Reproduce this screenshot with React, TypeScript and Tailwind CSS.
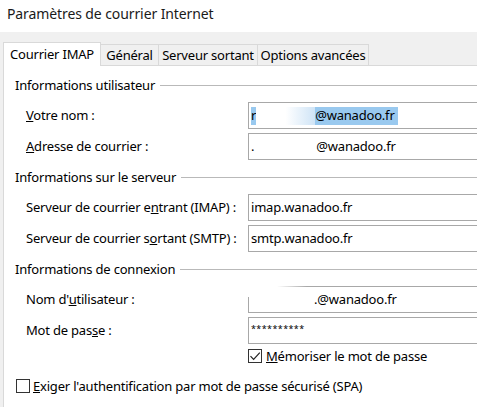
import React from "react";

const font = { fontFamily: '"Noto Sans", "Open Sans", sans-serif' };

function GroupHeader({ title }: { title: string }) {
    return (
        <div className="flex items-center h-[20px] pl-[11px]">
            <span>{title}</span>
            <div className="flex-1 h-px bg-[#b9b9b9] ml-[5px]" />
        </div>
    );
}

function Row({ label, children, smudge }: { label: React.ReactNode; children: React.ReactNode; smudge?: boolean }) {
    return (
        <div className="flex items-center h-[27px]">
            <div className="w-[244px] pl-[22px] shrink-0 whitespace-nowrap">{label}</div>
            <div className="relative w-[260px] h-[27px] shrink-0 border border-[#a8a8a8] bg-white pl-[2px] flex items-center whitespace-nowrap">
                {children}
                {/* zone floutée par-dessus la bordure */}
                {smudge && <div className="absolute -left-[2px] -top-[2px] w-[60px] h-[12px] bg-gradient-to-r from-white via-white to-transparent" />}
            </div>
        </div>
    );
}

function CheckBox({ checked }: { checked?: boolean }) {
    return (
        <span className="inline-flex w-[14px] h-[14px] border border-[#333333] bg-white items-center justify-center shrink-0">
            {checked && (
                <svg width="12" height="12" viewBox="0 0 12 12">
                    <path d="M1.5 6.2 L4.6 9.3 L10.8 2.6" fill="none" stroke="#222" strokeWidth="1.2" />
                </svg>
            )}
        </span>
    );
}

export default function App() {
    return (
        <div className="w-[477px] h-[407px] overflow-hidden bg-[#f0f0f0] text-[13px] tracking-[-0.2px] text-black leading-none" style={font}>
            {/* Titre */}
            <div className="h-[32px] bg-white pl-[7px] pt-[7px] text-[14px] tracking-[-0.1px] text-[#1a1a1a]">Paramètres de courrier Internet</div>

            {/* Onglets */}
            <div className="h-[33px] flex items-end pl-[3px] whitespace-nowrap">
                <div className="h-[24px] w-[98px] bg-white border-t border-l border-r border-[#d9d9d9] flex items-center justify-center relative -mb-px z-10">
                    Courrier IMAP
                </div>
                <div className="h-[21px] w-[58px] border-t border-r border-[#d9d9d9] flex items-center justify-center">Général</div>
                <div className="h-[21px] w-[99px] border-t border-r border-[#d9d9d9] flex items-center justify-center">Serveur sortant</div>
                <div className="h-[21px] w-[111px] border-t border-r border-[#d9d9d9] flex items-center justify-center">Options avancées</div>
            </div>

            {/* Contenu */}
            <div className="ml-[3px] h-[400px] bg-white border-t border-l border-[#d9d9d9] pt-[9px] flex flex-col">
                <GroupHeader title="Informations utilisateur" />
                <div className="mt-[7px] flex flex-col gap-[4px]">
                    <Row label={<><u>V</u>otre nom :</>}>
                        <span className="bg-[#99c9ef] flex items-center h-[18px]">
                            <span>r</span>
                            <span className="inline-block w-[59px] h-[18px] bg-gradient-to-r from-white via-white to-[#cfe4f6]" />
                            <span className="pr-[3px]">@wanadoo.fr</span>
                        </span>
                    </Row>
                    <Row label={<><u>A</u>dresse de courrier :</>}>
                        <span>.</span>
                        <span className="inline-block w-[62px]" />
                        <span>@wanadoo.fr</span>
                    </Row>
                </div>

                <div className="mt-[7px]">
                    <GroupHeader title="Informations sur le serveur" />
                </div>
                <div className="mt-[7px] flex flex-col gap-[4px]">
                    <Row label={<>Serveur de courrier e<u>n</u>trant (IMAP) :</>}>imap.wanadoo.fr</Row>
                    <Row label={<>Serveur de courrier s<u>o</u>rtant (SMTP) :</>}>smtp.wanadoo.fr</Row>
                </div>

                <div className="mt-[7px]">
                    <GroupHeader title="Informations de connexion" />
                </div>
                <div className="mt-[7px] flex flex-col gap-[4px]">
                    <Row label={<>Nom d'<u>u</u>tilisateur :</>} smudge>
                        <span className="inline-block w-[63px]" />
                        <span>.@wanadoo.fr</span>
                    </Row>
                    <Row label={<>Mot de pas<u>s</u>e :</>}>
                        <span className="text-[9px] tracking-[0.4px] -mt-[4px]">**********</span>
                    </Row>
                </div>

                <div className="mt-[4px] h-[16px] flex items-center pl-[244px] gap-[4px] whitespace-nowrap">
                    <CheckBox checked />
                    <span><u>M</u>émoriser le mot de passe</span>
                </div>

                <div className="mt-[14px] h-[16px] flex items-center pl-[12px] gap-[3px] whitespace-nowrap">
                    <CheckBox />
                    <span><u>E</u>xiger l'authentification par mot de passe sécurisé (SPA)</span>
                </div>
            </div>
        </div>
    );
}
